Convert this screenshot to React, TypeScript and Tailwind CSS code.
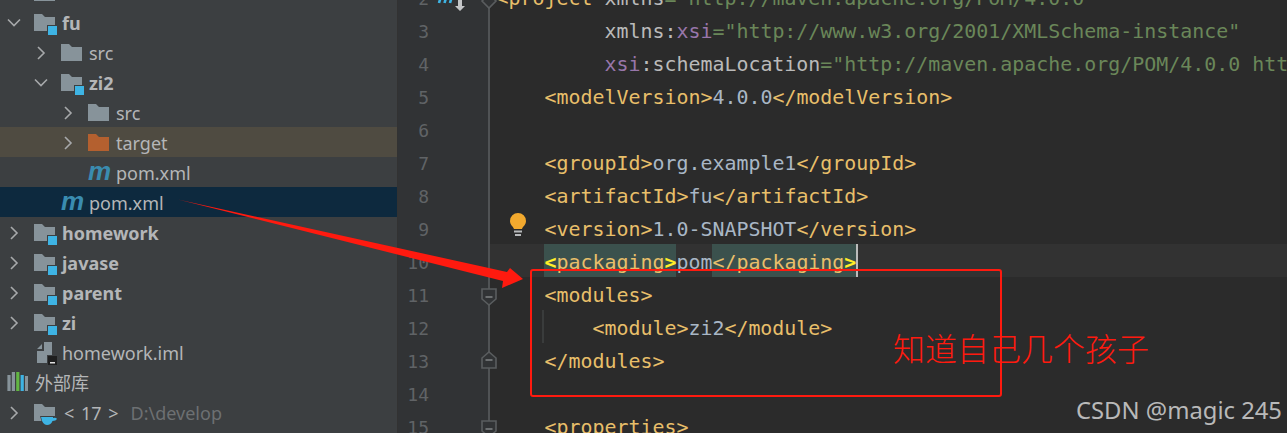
import React from "react";

const Chevron = ({ open }: { open?: boolean }) => (
  <svg width="14" height="14" viewBox="0 0 14 14" fill="none" stroke="#a7a9ab" strokeWidth="1.6" className="mt-[1px] shrink-0">
    {open ? <path d="M1 3.5 L7 9.5 L13 3.5" /> : <path d="M4 1 L10 7 L4 13" />}
  </svg>
);

const Folder = ({ color = "#87939a", mod, cup }: { color?: string; mod?: boolean; cup?: boolean }) => (
  <svg width="24" height="24" viewBox="0 0 24 24" className="shrink-0 overflow-visible">
    <path d="M0 4 H8 L11 7 H21 V21 H0 Z" fill={color} />
    {mod && <rect x="13" y="15" width="11" height="11" fill="#3c3f41" />}
    {mod && <rect x="14" y="16" width="9" height="9" fill="#3eb4e4" />}
    {cup && <path d="M6 16 H24 V20 L19 26 H9 Z" fill="#3c3f41" />}
    {cup && <path d="M7 17 H19 V18 Q22 17 23 19 Q22 21 18.5 21 Q17 25 13 25 Q8.5 25 7 17 Z" fill="#3eb4e4" />}
  </svg>
);

const MavenIcon = () => (
  <span className="-mt-[2px] w-[24px] shrink-0 text-left text-[26px] leading-[24px] font-bold italic text-[#3a8cb0] font-['Liberation_Sans',sans-serif]">
    m
  </span>
);

const ImlIcon = () => (
  <svg width="24" height="24" viewBox="0 0 24 24" className="shrink-0 overflow-visible">
    <path d="M3 9 L8 4 V9 Z M10 2 H18 V15 H13 V23 H3 V11 H10 Z" fill="#87939a" />
    <rect x="14" y="16" width="9" height="9" fill="#1f1f1f" />
    <rect x="16" y="22" width="5" height="1.5" fill="#e0e0e0" />
  </svg>
);

const LibIcon = () => (
  <svg width="24" height="24" viewBox="0 0 24 24" className="shrink-0">
    <rect x="0.4" y="5" width="3.2" height="16" fill="#87939a" />
    <rect x="4.8" y="2" width="3.2" height="19" fill="#87939a" />
    <rect x="9.2" y="2" width="3.2" height="19" fill="#62b543" />
    <rect x="13.6" y="5" width="3.2" height="16" fill="#3eb4e4" />
    <rect x="18" y="6" width="3" height="15" fill="#87939a" />
  </svg>
);

type RowProps = {
  depth: number;
  chevron?: "open" | "closed";
  icon: React.ReactNode;
  bg?: string;
  children?: React.ReactNode;
  bold?: boolean;
};

const depthPad = ["pl-[7px]", "pl-[34px]", "pl-[61px]"];

const Row = ({ depth, chevron, icon, bg = "", bold, children }: RowProps) => (
  <div
    className={`flex h-[30px] items-center ${depthPad[depth]} ${bg} ${bold ? "font-bold" : ""} whitespace-nowrap text-[18px] text-[#b4b6b8]`}
  >
    <span className="flex w-[27px] shrink-0 items-center">{chevron && <Chevron open={chevron === "open"} />}</span>
    <span className="flex w-[28px] shrink-0 items-center">{icon}</span>
    <span className="mt-[2px]">{children}</span>
  </div>
);

const Tag = ({ children }: { children: React.ReactNode }) => <span className="text-[#e8bf6a]">{children}</span>;
const Val = ({ children }: { children: React.ReactNode }) => <span className="text-[#a9b7c6]">{children}</span>;
const Attr = ({ children }: { children: React.ReactNode }) => <span className="text-[#bababa]">{children}</span>;
const Ns = ({ children }: { children: React.ReactNode }) => <span className="text-[#9876aa]">{children}</span>;
const Str = ({ children }: { children: React.ReactNode }) => <span className="text-[#6a8759]">{children}</span>;

const Hl = ({ children }: { children: React.ReactNode }) => <span className="inline-block h-[33px] bg-[#3b514d]">{children}</span>;
const Brace = ({ children }: { children: React.ReactNode }) => <span className="font-bold text-[#ffef28]">{children}</span>;

const lines: { n: number; active?: boolean; el: React.ReactNode }[] = [
  {
    n: 2,
    el: (
      <>
        <Tag>{"<project "}</Tag>
        <Attr>xmlns</Attr>
        <Str>="http://maven.apache.org/POM/4.0.0"</Str>
      </>
    ),
  },
  {
    n: 3,
    el: (
      <>
        {"         "}
        <Attr>xmlns:</Attr>
        <Ns>xsi</Ns>
        <Str>="http://www.w3.org/2001/XMLSchema-instance"</Str>
      </>
    ),
  },
  {
    n: 4,
    el: (
      <>
        {"         "}
        <Ns>xsi</Ns>
        <Attr>:schemaLocation</Attr>
        <Str>="http://maven.apache.org/POM/4.0.0 http://maven.apache.org/xsd/maven-4.0.0.xsd"</Str>
      </>
    ),
  },
  { n: 5, el: <>{"    "}<Tag>{"<modelVersion>"}</Tag><Val>4.0.0</Val><Tag>{"</modelVersion>"}</Tag></> },
  { n: 6, el: null },
  { n: 7, el: <>{"    "}<Tag>{"<groupId>"}</Tag><Val>org.example1</Val><Tag>{"</groupId>"}</Tag></> },
  { n: 8, el: <>{"    "}<Tag>{"<artifactId>"}</Tag><Val>fu</Val><Tag>{"</artifactId>"}</Tag></> },
  { n: 9, el: <>{"    "}<Tag>{"<version>"}</Tag><Val>1.0-SNAPSHOT</Val><Tag>{"</version>"}</Tag></> },
  {
    n: 10,
    active: true,
    el: (
      <>
        {"    "}
        <Hl><Brace>{"<"}</Brace><Tag>packaging</Tag><Brace>{">"}</Brace></Hl>
        <Val>pom</Val>
        <Hl><Tag>{"</packaging"}</Tag><Brace>{">"}</Brace></Hl>
        <span className="inline-block h-[33px] w-[2px] bg-[#bbbbbb] align-top" />
      </>
    ),
  },
  { n: 11, el: <>{"    "}<Tag>{"<modules>"}</Tag></> },
  { n: 12, el: <>{"        "}<Tag>{"<module>"}</Tag><Val>zi2</Val><Tag>{"</module>"}</Tag></> },
  { n: 13, el: <>{"    "}<Tag>{"</modules>"}</Tag></> },
  { n: 14, el: null },
  { n: 15, el: <>{"    "}<Tag>{"<properties>"}</Tag></> },
];

const Fold = ({ kind }: { kind: "open" | "close" | "hex" }) => (
  <svg
    width="18"
    height="20"
    viewBox="0 0 18 20"
    className={`absolute left-[-8px] ${kind === "close" ? "top-[8px]" : "top-[11px]"}`}
    fill="#313335"
    stroke="#5a5d5f"
    strokeWidth="1.6"
  >
    {kind === "open" && <path d="M2 1 H16 V11 L9 17 L2 11 Z" />}
    {kind === "close" && <path d="M2 17 H16 V7 L9 1 L2 7 Z" />}
    {kind === "hex" && <path d="M2 10 L9 3 L16 10 L9 17 Z" />}
    {kind !== "hex" && <path d="M5.5 9 H12.5" stroke="#7c7f81" />}
  </svg>
);

export default function App() {
  return (
    <div className="relative flex h-[433px] w-[1287px] overflow-hidden bg-[#2b2b2b] font-['Noto_Sans','Noto_Sans_CJK_SC',sans-serif]">
      <aside className="w-[398px] shrink-0 border-r border-[#323232] bg-[#3c3f41]">
        <div className="-mt-[23px]">
          <Row depth={0} icon={<Folder />} />
          <Row depth={0} chevron="open" icon={<Folder mod />} bold>fu</Row>
          <Row depth={1} chevron="closed" icon={<Folder />}>src</Row>
          <Row depth={1} chevron="open" icon={<Folder mod />} bold>zi2</Row>
          <Row depth={2} chevron="closed" icon={<Folder />}>src</Row>
          <Row depth={2} chevron="closed" icon={<Folder color="#b4602f" />} bg="bg-[#4f4b41]">target</Row>
          <Row depth={2} icon={<MavenIcon />}>pom.xml</Row>
          <Row depth={1} icon={<MavenIcon />} bg="bg-[#0d293e]">pom.xml</Row>
          <Row depth={0} chevron="closed" icon={<Folder mod />} bold>homework</Row>
          <Row depth={0} chevron="closed" icon={<Folder mod />} bold>javase</Row>
          <Row depth={0} chevron="closed" icon={<Folder mod />} bold>parent</Row>
          <Row depth={0} chevron="closed" icon={<Folder mod />} bold>zi</Row>
          <Row depth={0} icon={<ImlIcon />}>homework.iml</Row>
          <div className="flex h-[30px] items-center gap-[4px] pl-[7px] text-[18px] text-[#b4b6b8]">
            <LibIcon />
            <span className="mt-[2px]">外部库</span>
          </div>
          <Row depth={0} chevron="closed" icon={<Folder cup />}>
            <span className="ml-[2px] [word-spacing:2px]">{"< 17 >"}</span>
            <span className="ml-[12px] text-[#6d7072]">D:\develop</span>
          </Row>
        </div>
      </aside>

      <main className="-mt-[20px] min-w-0 flex-1">
        {lines.map((l) => (
          <div key={l.n} className={`flex h-[33px] ${l.active ? "bg-[#323232]" : ""}`}>
            <div className="relative flex w-[92px] shrink-0 justify-start bg-[#313335]">
              <span className="w-[31px] text-right font-['DejaVu_Sans_Mono',monospace] text-[18px] leading-[37px] text-[#606366]">{l.n}</span>
              <span className="absolute left-[89.5px] top-0 h-[33px] w-[2px] bg-[#505355]" />
              {l.n === 2 && <span className="absolute left-[89.5px]"><Fold kind="hex" /></span>}
              {(l.n === 11 || l.n === 15) && <span className="absolute left-[89.5px]"><Fold kind="open" /></span>}
              {l.n === 13 && <span className="absolute left-[89.5px]"><Fold kind="close" /></span>}
              {l.n === 2 && (
                <svg width="36" height="36" viewBox="0 0 36 36" className="absolute left-[38px] top-0">
                  <path d="M3 23 L4.5 18 M8.5 23 L10 18 M14 23 L15.5 18" stroke="#3eb4e4" strokeWidth="2.6" fill="none" />
                  <path d="M22 16 H26 V26 H29 L24 31 L19 26 H22 Z" fill="#c4c6c8" />
                </svg>
              )}
            </div>
            <div className="relative min-w-0 flex-1 whitespace-pre pl-[6.5px] font-['DejaVu_Sans_Mono',monospace] text-[19.93px] leading-[37px] text-[#a9b7c6]">
              {l.el}
              {l.n === 9 && (
                <svg width="18" height="24" viewBox="0 0 18 24" className="absolute left-[19px] top-[2px]">
                  <path d="M9 0 A8 8 0 0 1 17 8 C17 12 14 13 13 16 H5 C4 13 1 12 1 8 A8 8 0 0 1 9 0 Z" fill="#f2a92e" />
                  <rect x="5" y="17.5" width="8" height="2" fill="#b8babc" />
                  <rect x="6" y="21" width="6" height="2" fill="#b8babc" />
                </svg>
              )}
              {l.n === 12 && <span className="absolute left-[52px] top-0 h-[33px] w-[2px] bg-[#3a3c3c]" />}
            </div>
          </div>
        ))}
      </main>

      <svg width="1287" height="433" viewBox="0 0 1287 433" className="pointer-events-none absolute left-0 top-0">
        <polygon points="178,199.5 507,272 510,268 523,279 502,288 503,281" fill="#ff1a0f" />
      </svg>
      <div className="absolute left-[530px] top-[269px] h-[128px] w-[472px] rounded-[3px] border-2 border-[#ff1a0f]" />
      <div className="absolute left-[893px] top-[324px] text-[32px] leading-[46px] font-light whitespace-nowrap text-[#ff1a0f] font-['Noto_Sans_CJK_SC',sans-serif]">
        知道自己几个孩子
      </div>
      <div className="absolute left-[1076px] top-[395px] text-[23.8px] leading-[30px] whitespace-nowrap text-[#b9b9b9] font-['Noto_Sans',sans-serif]">
        CSDN @magic 245
      </div>
    </div>
  );
}
